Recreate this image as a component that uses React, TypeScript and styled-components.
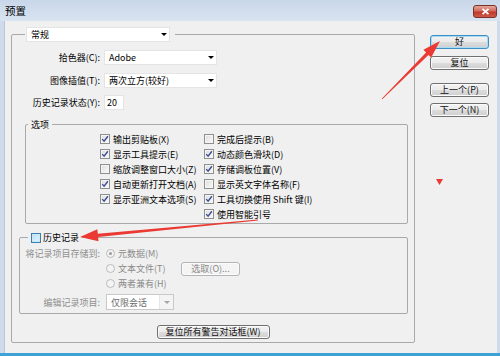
import React from "react";
import styled, { createGlobalStyle } from "styled-components";

const GlobalStyle = createGlobalStyle`
  html, body { margin: 0; padding: 0; }
  body {
    width: 500px;
    height: 356px;
    overflow: hidden;
    background: #f0f0f0;
    font-family: "Noto Sans CJK SC", "Noto Sans", sans-serif;
    font-size: 9px;
    color: #000;
  }
`;

const Window = styled.div`
  position: relative;
  width: 500px;
  height: 356px;
  box-sizing: border-box;
  display: flex;
  flex-direction: column;
  background: #cddbeb;
  border-bottom: 3px solid #3ea2d6;
`;

const TitleBar = styled.div`
  height: 21px;
  flex: none;
  display: flex;
  align-items: center;
  justify-content: space-between;
  padding: 0 3px 0 5px;
  background: linear-gradient(#c8d7e9, #d9e4f1);
  font-size: 10.5px;
`;

const CloseButton = styled.div`
  width: 24px;
  height: 13px;
  margin-top: 1px;
  box-sizing: border-box;
  border: 1px solid #7a3129;
  border-radius: 3px;
  background: linear-gradient(#e7a69c 0%, #d06a5d 45%, #c0392c 55%, #cd5a46 100%);
  display: flex;
  align-items: center;
  justify-content: center;
`;

const Client = styled.div`
  flex: 1;
  margin: 0 3px 0 4px;
  background: #f0f0f0;
  border-left: 1px solid #b9c7d6;
  padding: 6px 0 0 6px;
  display: flex;
  align-items: flex-start;
  gap: 15px;
`;

const Group = styled.fieldset<{ $ml?: number; $mt?: number }>`
  margin: ${(p) => p.$mt ?? 0}px 6px 0 ${(p) => p.$ml ?? 0}px;
  padding: 0;
  border: 1px solid #a9a9a9;
  border-radius: 2px;
  min-inline-size: 0;
`;

const OuterGroup = styled(Group)`
  width: 404px;
  box-sizing: border-box;
  margin: 0;
  height: 316px;
`;

const Legend = styled.legend<{ $ml: number }>`
  margin-left: ${(p) => p.$ml}px;
  padding: 0 3px;
  line-height: 15px;
  display: flex;
  align-items: center;
  gap: 2px;
`;

const TopLegend = styled(Legend)`
  padding: 0 5px 0 1px;
`;

const Combo = styled.div<{ $w: number; $h?: number; $disabled?: boolean }>`
  width: ${(p) => p.$w}px;
  height: ${(p) => p.$h ?? 15}px;
  box-sizing: border-box;
  background: #fff;
  border: 1px solid ${(p) => (p.$disabled ? "#c9c9c9" : "#e4e4e4")};
  display: flex;
  align-items: center;
  padding-left: 4px;
  color: ${(p) => (p.$disabled ? "#6a6a6a" : "#000")};
  line-height: 13px;
`;

const ComboText = styled.span`
  flex: 1;
`;

const ComboArrow = styled.span<{ $disabled?: boolean }>`
  width: ${(p) => (p.$disabled ? 13 : 11)}px;
  align-self: stretch;
  display: flex;
  align-items: center;
  justify-content: center;
  background: ${(p) => (p.$disabled ? "#f4f4f4" : "transparent")};
  border-left: ${(p) => (p.$disabled ? "1px solid #e6e6e6" : "none")};
  &::after {
    content: "";
    border-left: 3px solid transparent;
    border-right: 3px solid transparent;
    border-top: 3px solid ${(p) => (p.$disabled ? "#a5a5a5" : "#000")};
  }
`;

const FormGrid = styled.div`
  display: grid;
  grid-template-columns: 88px auto;
  column-gap: 4px;
  row-gap: 7.5px;
  padding-top: 8px;
  justify-items: start;
  align-items: center;
`;

const Label = styled.span<{ $disabled?: boolean }>`
  justify-self: end;
  white-space: nowrap;
  line-height: 15px;
  color: ${(p) => (p.$disabled ? "#8f8f8f" : "#000")};
`;

const NumberBox = styled.div`
  width: 20px;
  height: 15px;
  box-sizing: border-box;
  background: #fff;
  border: 1px solid #e4e4e4;
  padding-left: 2px;
  line-height: 13px;
`;

const OptionCols = styled.div`
  display: flex;
  padding: 0 0 1px 74px;
`;

const OptionCol = styled.div<{ $w?: number }>`
  width: ${(p) => (p.$w ? `${p.$w}px` : "auto")};
  display: flex;
  flex-direction: column;
`;

const Row = styled.div<{ $disabled?: boolean }>`
  height: 15px;
  display: flex;
  align-items: center;
  gap: 3px;
  white-space: nowrap;
  color: ${(p) => (p.$disabled ? "#8a8a8a" : "#000")};
`;

const Box = styled.span<{ $hover?: boolean }>`
  width: 10px;
  height: 10px;
  flex: none;
  box-sizing: border-box;
  border: 1px solid ${(p) => (p.$hover ? "#3c7fb1" : "#8e8f8f")};
  background: ${(p) =>
    p.$hover
      ? "linear-gradient(135deg, #b9e0f7, #e6f5fd)"
      : "linear-gradient(135deg, #dcdcdc, #fbfbfb)"};
  box-shadow: inset 0 0 0 1px ${(p) => (p.$hover ? "#c6e9fb" : "#f5f5f5")};
  display: flex;
  align-items: center;
  justify-content: center;
`;

const Radio = styled.span<{ $on?: boolean }>`
  width: 9px;
  height: 9px;
  flex: none;
  box-sizing: border-box;
  border-radius: 50%;
  border: 1px solid #bcbcbc;
  background: #f4f4f4;
  display: flex;
  align-items: center;
  justify-content: center;
  &::after {
    content: "";
    display: ${(p) => (p.$on ? "block" : "none")};
    width: 3px;
    height: 3px;
    border-radius: 50%;
    background: #9a9a9a;
  }
`;

const HistoryGrid = styled.div`
  display: grid;
  grid-template-columns: 80px auto;
  column-gap: 6px;
  row-gap: 3px;
  padding: 1px 0 3px;
  justify-items: start;
  align-items: start;
`;

const RadioText = styled.span<{ $w?: number }>`
  min-width: ${(p) => p.$w ?? 0}px;
`;

const EditLabel = styled(Label)`
  align-self: center;
`;

const Button = styled.div<{ $primary?: boolean; $disabled?: boolean; $w: number; $mt?: number }>`
  width: ${(p) => p.$w}px;
  height: 14px;
  margin-top: ${(p) => p.$mt ?? 0}px;
  box-sizing: border-box;
  border-radius: 3px;
  border: 1px solid ${(p) => (p.$primary ? "#3d8fc4" : p.$disabled ? "#b1b5b8" : "#707070")};
  background: ${(p) =>
    p.$disabled
      ? "#f4f4f4"
      : "linear-gradient(#f3f3f3 0%, #ebebeb 50%, #dddddd 50%, #cfcfcf 100%)"};
  box-shadow: inset 0 0 0 1px ${(p) => (p.$primary ? "#a8dcf5" : "#fbfbfb")};
  color: ${(p) => (p.$disabled ? "#888" : "#111")};
  display: flex;
  align-items: center;
  justify-content: center;
  line-height: 12px;
  white-space: nowrap;
  flex: none;
`;

const ResetRow = styled.div`
  display: flex;
  justify-content: center;
  margin-top: 11px;
`;

const ButtonCol = styled.div`
  display: flex;
  flex-direction: column;
  margin-top: 8px;
`;

const Overlay = styled.svg`
  position: absolute;
  left: 0;
  top: 0;
  pointer-events: none;
`;

function CheckBox({ checked, hover }: { checked?: boolean; hover?: boolean }) {
  return (
    <Box $hover={hover}>
      {checked && (
        <svg width="8" height="8" viewBox="0 0 8 8">
          <path d="M1.2 4.1 L3.1 6.2 L6.9 1.3" fill="none" stroke="#3c4d93" strokeWidth="1.4" />
        </svg>
      )}
    </Box>
  );
}

function Select({ text, w, h, disabled }: { text: string; w: number; h?: number; disabled?: boolean }) {
  return (
    <Combo $w={w} $h={h} $disabled={disabled}>
      <ComboText>{text}</ComboText>
      <ComboArrow $disabled={disabled} />
    </Combo>
  );
}

const leftOptions: [string, boolean][] = [
  ["输出剪贴板(X)", true],
  ["显示工具提示(E)", true],
  ["缩放调整窗口大小(Z)", false],
  ["自动更新打开文档(A)", true],
  ["显示亚洲文本选项(S)", true],
];

const rightOptions: [string, boolean][] = [
  ["完成后提示(B)", false],
  ["动态颜色滑块(D)", true],
  ["存储调板位置(V)", true],
  ["显示英文字体名称(F)", false],
  ["工具切换使用 Shift 键(I)", true],
  ["使用智能引号", true],
];

function arrow(tx: number, ty: number, hx: number, hy: number, head: number, half: number) {
  const dx = hx - tx;
  const dy = hy - ty;
  const len = Math.hypot(dx, dy);
  const ux = dx / len;
  const uy = dy / len;
  const px = -uy;
  const py = ux;
  const bx = hx - ux * head;
  const by = hy - uy * head;
  const pts = [
    [tx + px * 0.4, ty + py * 0.4],
    [bx + px * 1.6, by + py * 1.6],
    [bx + px * half, by + py * half],
    [hx, hy],
    [bx - px * half, by - py * half],
    [bx - px * 1.6, by - py * 1.6],
    [tx - px * 0.4, ty - py * 0.4],
  ];
  return pts.map((p) => `${p[0].toFixed(1)},${p[1].toFixed(1)}`).join(" ");
}

export default function App() {
  return (
    <Window>
      <GlobalStyle />
      <TitleBar>
        <span>预置</span>
        <CloseButton>
          <svg width="9" height="7" viewBox="0 0 9 7">
            <path d="M1.5 0.8 L7.5 6.2 M7.5 0.8 L1.5 6.2" stroke="#fff" strokeWidth="1.8" />
          </svg>
        </CloseButton>
      </TitleBar>
      <Client>
        <OuterGroup>
          <TopLegend $ml={13}>
            <Select text="常规" w={144} />
          </TopLegend>
          <FormGrid>
            <Label>拾色器(C):</Label>
            <Select text="Adobe" w={113} />
            <Label>图像插值(T):</Label>
            <Select text="两次立方(较好)" w={113} />
            <Label>历史记录状态(Y):</Label>
            <NumberBox>20</NumberBox>
          </FormGrid>

          <Group $ml={13} $mt={6.5}>
            <Legend $ml={2}>选项</Legend>
            <OptionCols>
              <OptionCol $w={104}>
                {leftOptions.map(([t, c]) => (
                  <Row key={t}>
                    <CheckBox checked={c} />
                    <span>{t}</span>
                  </Row>
                ))}
              </OptionCol>
              <OptionCol>
                {rightOptions.map(([t, c]) => (
                  <Row key={t}>
                    <CheckBox checked={c} />
                    <span>{t}</span>
                  </Row>
                ))}
              </OptionCol>
            </OptionCols>
          </Group>

          <Group $ml={7} $mt={6.5}>
            <Legend $ml={8}>
              <CheckBox hover />
              <span>历史记录</span>
            </Legend>
            <HistoryGrid>
              <Label $disabled>将记录项目存储到:</Label>
              <OptionCol>
                <Row $disabled>
                  <Radio $on />
                  <span>元数据(M)</span>
                </Row>
                <Row $disabled>
                  <Radio />
                  <RadioText $w={60}>文本文件(T)</RadioText>
                  <Button $disabled $w={59}>选取(O)...</Button>
                </Row>
                <Row $disabled>
                  <Radio />
                  <span>两者兼有(H)</span>
                </Row>
              </OptionCol>
              <EditLabel $disabled>编辑记录项目:</EditLabel>
              <Select text="仅限会话" w={68} h={16} disabled />
            </HistoryGrid>
          </Group>

          <ResetRow>
            <Button $w={113}>复位所有警告对话框(W)</Button>
          </ResetRow>
        </OuterGroup>

        <ButtonCol>
          <Button $primary $w={59}>好</Button>
          <Button $w={59} $mt={7}>复位</Button>
          <Button $w={59} $mt={13}>上一个(P)</Button>
          <Button $w={59} $mt={6}>下一个(N)</Button>
        </ButtonCol>
      </Client>

      <Overlay width="500" height="356" viewBox="0 0 500 356">
        <polygon points={arrow(382, 99, 440, 41, 18, 5.5)} fill="#ea3a33" />
        <polygon points={arrow(258, 220, 80, 237, 18, 6)} fill="#ea3a33" />
        <polygon points="436,179 443,179 439.5,185" fill="#ea3a33" />
      </Overlay>
    </Window>
  );
}
